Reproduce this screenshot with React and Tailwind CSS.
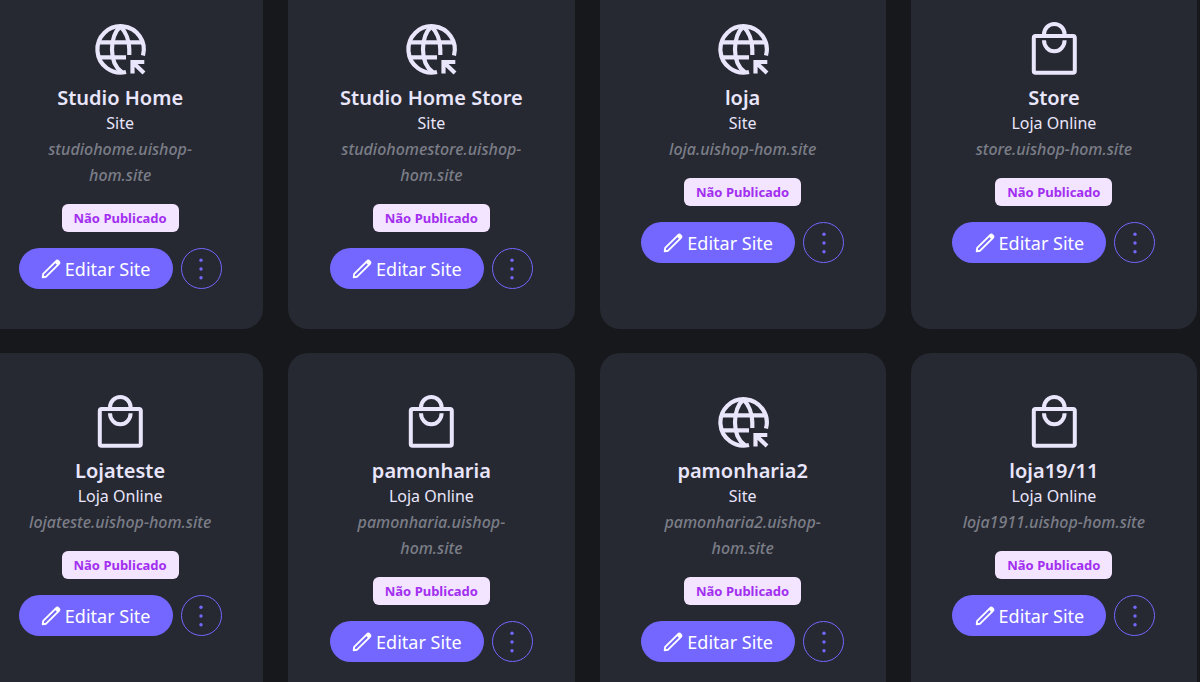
import React from 'react';

const sites = [
  { name: 'Studio Home', type: 'site', url: 'studiohome.uishop-hom.site' },
  { name: 'Studio Home Store', type: 'site', url: 'studiohomestore.uishop-hom.site' },
  { name: 'loja', type: 'site', url: 'loja.uishop-hom.site' },
  { name: 'Store', type: 'store', url: 'store.uishop-hom.site' },
  { name: 'Lojateste', type: 'store', url: 'lojateste.uishop-hom.site' },
  { name: 'pamonharia', type: 'store', url: 'pamonharia.uishop-hom.site' },
  { name: 'pamonharia2', type: 'site', url: 'pamonharia2.uishop-hom.site' },
  { name: 'loja19/11', type: 'store', url: 'loja1911.uishop-hom.site' }
];

const GlobeIcon = () => (
  <svg viewBox="0 0 60 60" className="w-15 h-15" fill="none" stroke="currentColor" strokeWidth="4.2" aria-hidden="true">
    <path d="M36 52A23.200 23.200 0 1 1 53 35.500" />
    <path d="M8.500 22.300h43.500M8.500 37.300H36" />
    <path d="M30.300 6.500C25 11.500 22 20.500 22 29.500S25 47.500 32 52.300" />
    <path d="M30.300 6.500C35.600 11.500 39.300 20.500 39.300 29.500V35" />
    <path d="M54.300 42H42.500V53.500M42.500 42l11.500 11" />
  </svg>
);

const BagIcon = () => (
  <svg viewBox="0 0 60 60" className="w-15 h-15" fill="none" stroke="currentColor" strokeWidth="4" aria-hidden="true">
    <rect x="9.8" y="16" width="41" height="36.700" rx="1.800" />
    <path d="M20 15v-.7a10.300 10.300 0 0 1 20.600 0v.7" />
    <path d="M20 20.300a10.300 11 0 0 0 20.600 0" />
  </svg>
);

const PencilIcon = () => (
  <svg viewBox="0 0 20 20" className="w-5 h-5" fill="none" stroke="currentColor" strokeWidth="1.900" strokeLinejoin="round" strokeLinecap="round" aria-hidden="true">
    <path d="M1.700 18.300l.5-3.400L14.900 2.300a1.900 1.900 0 0 1 2.800 2.800L5.100 17.700z" />
    <path d="M14.700 3.200l2.100 2.100L17.500 3.500 16 2.500z" />
  </svg>
);

const DotsIcon = () => (
  <svg viewBox="0 0 24 24" className="w-6 h-6" fill="currentColor" aria-hidden="true">
    <circle cx="12" cy="3.300" r="1.700" />
    <circle cx="12" cy="12" r="1.700" />
    <circle cx="12" cy="20.700" r="1.700" />
  </svg>
);

const SiteCard = ({ site }) => (
  <article className="flex flex-col items-center rounded-[20px] bg-[#262932] p-10 text-center text-[#e9e5fb]">
    {site.type === 'site' ? <GlobeIcon /> : <BagIcon />}
    <h2 className="mt-1 text-xl leading-7 font-semibold whitespace-nowrap">{site.name}</h2>
    <p className="text-base leading-[22px]">{site.type === 'site' ? 'Site' : 'Loja Online'}</p>
    <p className="mt-0.5 px-1 text-base leading-[26px] font-medium text-[#7b7d87] italic">{site.url}</p>
    <span className="mt-4 rounded-md bg-[#f3e4ff] px-3 text-[13px] leading-7 font-bold text-[#a22ff0]">
      Não Publicado
    </span>
    <div className="mt-4 flex gap-2">
      <button type="button" className="flex h-[41px] w-[154px] items-center justify-center gap-1 rounded-full bg-[#7367ff] text-lg whitespace-nowrap text-white">
        <PencilIcon />
        Editar Site
      </button>
      <button type="button" aria-label="Mais opções" className="flex h-[41px] w-[41px] items-center justify-center rounded-full border border-[#7367ff] text-[#7367ff]">
        <DotsIcon />
      </button>
    </div>
  </article>
);

const App = () => {
  return (
    <main className="h-screen overflow-hidden bg-[#17181c] font-['Noto_Sans',sans-serif]">
      <div className="-mt-5 mr-[3px] -ml-[23px] grid grid-cols-4 gap-x-[25px] gap-y-6">
        {sites.map(site => (
          <SiteCard key={site.name} site={site} />
        ))}
      </div>
    </main>
  );
};

export default App;
